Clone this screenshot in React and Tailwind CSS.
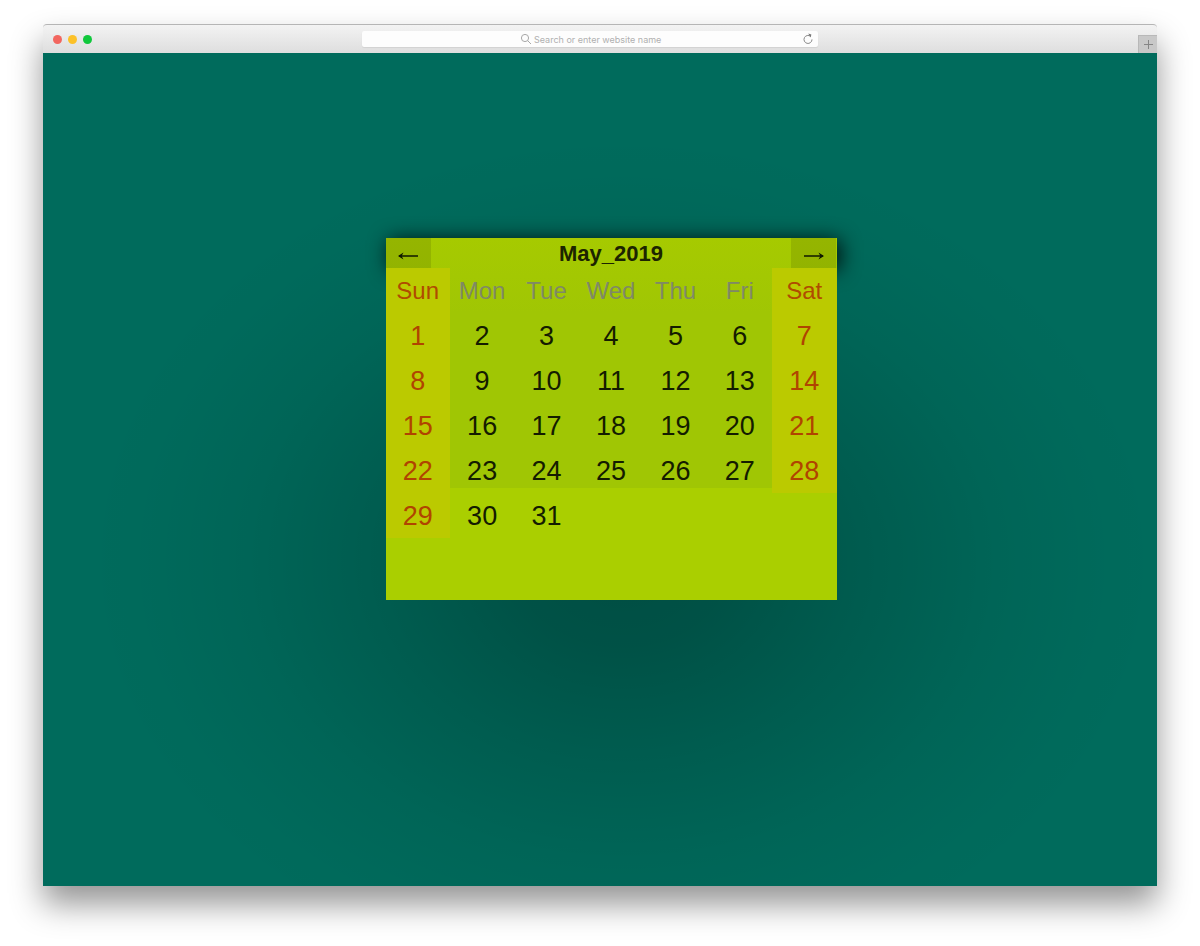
import React from "react";

const DAYS = ["Sun", "Mon", "Tue", "Wed", "Thu", "Fri", "Sat"];
const WEEKS = [0, 1, 2, 3, 4].map((w) =>
  DAYS.map((_, d) => {
    const n = w * 7 + d + 1;
    return n <= 31 ? n : null;
  })
);

function TitleBar() {
  return (
    <header className="grid h-[29px] grid-cols-[319fr_456px_339fr] rounded-t border-t border-[#b5b5b5] bg-linear-to-b from-[#f3f3f3] to-[#dedede]">
      <div className="flex items-center gap-[6px] pl-[10px]">
        <span className="size-[9px] rounded-full bg-[#f2665f]" />
        <span className="size-[9px] rounded-full bg-[#fcc128]" />
        <span className="size-[9px] rounded-full bg-[#10c83c]" />
      </div>
      <form
        className="mt-[6px] flex h-4 items-center rounded-xs bg-[#fdfdfd] pr-1 shadow-[0_1px_1px_#d2d2d2]"
        onSubmit={(e) => e.preventDefault()}
      >
        <label htmlFor="address" className="ml-[158px] shrink-0" aria-label="Address">
          <svg viewBox="0 0 12 12" className="size-3" fill="none" stroke="#a8a8a8">
            <circle cx="5" cy="5" r="3.6" />
            <path d="M7.7 7.7 11 11" />
          </svg>
        </label>
        <input
          id="address"
          type="text"
          placeholder="Search or enter website name"
          className="ml-[2px] h-4 min-w-0 flex-1 bg-transparent pt-px font-['Inter',sans-serif] text-[9px] leading-3 outline-none placeholder:text-[#b0b0b0]"
        />
        <button type="button" aria-label="Reload" className="shrink-0">
          <svg viewBox="0 0 12 12" className="size-3" fill="none" stroke="#888">
            <path d="M8.6 3.4A4 4 0 1 0 10 6.4" />
            <path d="M6.2 .6 9.4 1.4 8.6 4.4z" fill="#777" stroke="none" />
          </svg>
        </button>
      </form>
      <button
        type="button"
        aria-label="New tab"
        className="flex h-[18px] w-[19px] items-center justify-center self-end justify-self-end border-l border-t border-[#b8b8b8] bg-[#c8c8c8]"
      >
        <svg viewBox="0 0 9 9" className="size-[9px]" stroke="#858585">
          <path d="M4.5 0v9M0 4.5h9" />
        </svg>
      </button>
    </header>
  );
}

function Arrow({ path, head }) {
  return (
    <svg viewBox="0 0 20 8" className="mt-[5px] h-2 w-5" fill="none" stroke="#0f1700" strokeWidth="1.5">
      <path d={path} />
      <path d={head} fill="#0f1700" stroke="none" />
    </svg>
  );
}

function Calendar() {
  const weekend = (d) => d === 0 || d === 6;
  return (
    <section className="relative isolate w-[451px] pb-[62px] font-['Liberation_Sans',Arial,sans-serif]">
      <div className="absolute inset-x-0 top-0 -z-20 h-[30px] shadow-[3px_2px_20px_rgba(0,0,0,0.9)]" />
      <div className="absolute inset-0 -z-10 bg-[#aacf00]" />
      <div className="absolute inset-x-0 top-0 -z-10 h-[250px] bg-linear-to-b from-[#a6ca00] to-[#a0c604] to-30%" />
      <div className="flex h-[30px] items-stretch justify-between text-[#1c2400]">
        <button type="button" aria-label="Previous month" className="flex w-[45px] items-center justify-center bg-black/10">
          <Arrow path="M1 4H20" head="M0 4 5.5 .6 3.6 4 5.5 7.4z" />
        </button>
        <h1 className="text-[22px] leading-8 font-bold">May_2019</h1>
        <button type="button" aria-label="Next month" className="flex w-[45px] items-center justify-center bg-black/10">
          <Arrow path="M0 4H19" head="M20 4 14.5 .6 16.4 4 14.5 7.4z" />
        </button>
      </div>
      <table className="w-full table-fixed border-collapse text-center">
        <thead>
          <tr className="h-[45px]">
            {DAYS.map((name, d) => (
              <th
                key={name}
                scope="col"
                className={
                  weekend(d)
                    ? "bg-[#bbca00] p-0 text-[24px] leading-7 font-normal text-[#b04b00]"
                    : "p-0 text-[24px] leading-7 font-normal text-[#7f8966]"
                }
              >
                {name}
              </th>
            ))}
          </tr>
        </thead>
        <tbody>
          {WEEKS.map((week, w) => (
            <tr key={w} className="h-[45px]">
              {week.map((n, d) => (
                <td
                  key={d}
                  className={
                    n && weekend(d)
                      ? "bg-[#bbca00] p-0 text-[27px] leading-7 text-[#b04400]"
                      : "p-0 text-[27px] leading-7 text-[#141c00]"
                  }
                >
                  {n}
                </td>
              ))}
            </tr>
          ))}
        </tbody>
      </table>
    </section>
  );
}

export default function App() {
  return (
    <div className="flex min-h-screen flex-col bg-white px-[43px] pt-6 pb-[60px]">
      <div className="flex flex-1 flex-col rounded-t shadow-[0_18px_32px_rgba(0,0,0,0.42)]">
        <TitleBar />
        <main className="flex flex-1 items-start justify-center overflow-hidden bg-[#006b5c] bg-[radial-gradient(540px_430px_at_52%_61%,rgba(0,0,0,0.28),rgba(0,0,0,0.24)_20%,rgba(0,0,0,0.14)_45%,rgba(0,0,0,0.055)_70%,rgba(0,0,0,0.015)_88%,transparent)] pt-[185px] pb-10 pl-[22px]">
          <Calendar />
        </main>
      </div>
    </div>
  );
}
